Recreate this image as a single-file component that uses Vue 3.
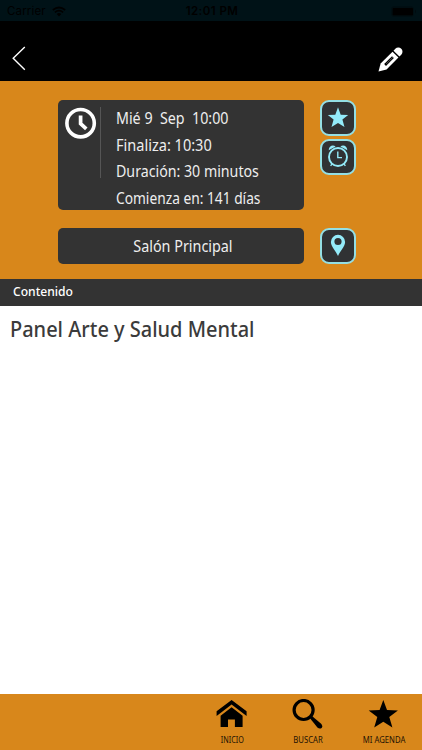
<script setup>
const details = [
  { text: 'Mié 9  Sep  10:00', cls: 'd0' },
  { text: 'Finaliza: 10:30', cls: 'd1' },
  { text: 'Duración: 30 minutos', cls: 'd2' },
  { text: 'Comienza en: 141 días', cls: 'd3' },
]
</script>

<template>
  <div class="screen">
    <div class="status">
      <div class="carrier">
        <span>Carrier</span>
        <svg width="14" height="11" viewBox="0 0 14 11">
          <path d="M.8 4Q7-1 13.2 4M2.9 6.4Q7 3 11.1 6.4" fill="none" stroke="#000" stroke-width="1.7" />
          <path d="M4.7 8Q7 6.2 9.3 8L7 10.4Z" fill="#000" />
        </svg>
      </div>
      <span class="time">12:01 PM</span>
      <svg class="battery" width="26" height="11" viewBox="0 0 26 11">
        <rect x="0.5" y="0.5" width="22" height="10" rx="2.5" fill="none" stroke="#000e12" />
        <rect x="1.5" y="1.8" width="20.5" height="7.6" rx="1.2" fill="#000" />
        <path d="M24 3.5q2 2 0 4z" fill="#000b0f" />
      </svg>
    </div>

    <header class="nav">
      <svg width="14" height="25" viewBox="0 0 14 25">
        <path d="M12.8 1L1.2 12.3L12.8 23.8" fill="none" stroke="#fff" stroke-width="1.4" />
      </svg>
      <svg width="26" height="26" viewBox="0 0 26 26">
        <g transform="translate(.5 25.6) rotate(-45)">
          <path d="M0 0L7.2-4.2H24V4.2H7.2Z" fill="#fff" />
          <path d="M25.4-4.2H28a4.2 4.2 0 0 1 0 8.4H25.4Z" fill="#fff" />
          <path d="M9.3-1.3H20.4V1.3H9.3Z" fill="#000" />
          <path d="M11-.25H20.4V.25H11Z" fill="#888" />
        </g>
      </svg>
    </header>

    <section class="info">
      <div class="row">
        <div class="card">
          <svg class="clock" width="32" height="32" viewBox="0 0 32 32" fill="none" stroke="#fff">
            <circle cx="15.6" cy="16.2" r="13.7" stroke-width="3.6" />
            <path d="M15.6 8.6V16.6L21.3 21.8" stroke-width="3.7" />
          </svg>
          <div class="rule"></div>
          <div class="details">
            <div v-for="d in details" :key="d.cls" :class="d.cls">{{ d.text }}</div>
          </div>
        </div>
        <div class="actions">
          <button class="action">
            <svg width="36" height="36" viewBox="0 0 36 36">
              <path d="M18 7.3L20.7 14.7L28.2 15L22.4 19.6L24.5 27L18 22.9L11.5 27L13.6 19.6L7.8 15L15.3 14.7Z" fill="#94ebf9" />
            </svg>
          </button>
          <button class="action">
            <svg width="36" height="36" viewBox="0 0 36 36" fill="none" stroke="#94ebf9">
              <circle cx="18" cy="18" r="9" stroke-width="1.9" />
              <path d="M17.8 12.6V18.6H22" stroke-width="1.4" />
              <path d="M8.7 11.2C8.7 7 13 5.2 15.6 7.6ZM27.3 11.2C27.3 7 23 5.2 20.4 7.6Z" fill="#94ebf9" stroke="none" />
              <path d="M12 25L10.6 26.9M24 25L25.4 26.9" stroke-width="1.3" />
            </svg>
          </button>
        </div>
      </div>
      <div class="row place">
        <div class="room"><span>Salón Principal</span></div>
        <button class="action">
          <svg width="36" height="36" viewBox="0 0 36 36">
            <path fill-rule="evenodd" d="M18 28.2C16.4 23.3 10.9 18.5 10.9 13.9A7.1 7.1 0 0 1 25.1 13.9C25.1 18.5 19.6 23.3 18 28.2ZM18 9.9A3.6 3.6 0 1 0 18 17.1A3.6 3.6 0 1 0 18 9.9Z" fill="#94ebf9" />
          </svg>
        </button>
      </div>
    </section>

    <div class="section-title"><span>Contenido</span></div>
    <main><h1>Panel Arte y Salud Mental</h1></main>

    <footer class="tabs">
      <div class="tab">
        <svg width="32" height="30" viewBox="0 0 32 30">
          <path d="M15.6 1L30.6 12.3V17L15.6 5.6L.6 17V12.3Z" />
          <path d="M15.6 8.3L26.6 16.8V28H18.9V20.6H12V28H4.6V16.8Z" />
        </svg>
        <span class="t0">INICIO</span>
      </div>
      <div class="tab">
        <svg width="32" height="30" viewBox="0 0 32 30">
          <circle cx="11.6" cy="11" r="9.5" fill="none" stroke="#000" stroke-width="3.2" />
          <path d="M17.4 18.6L19.4 16.6L29.4 25Q31 27.2 29.6 28.9Q27.8 30.4 25.4 28.6Z" />
        </svg>
        <span class="t1">BUSCAR</span>
      </div>
      <div class="tab">
        <svg width="32" height="30" viewBox="0 0 32 30">
          <path d="M15.3 1L19 11.1L29.9 11.5L21.3 18.1L24.4 28.6L15.3 22.7L6.2 28.6L9.3 18.1L.7 11.5L11.6 11.1Z" />
        </svg>
        <span class="t2">MI AGENDA</span>
      </div>
    </footer>
  </div>
</template>

<style>
body { margin: 0; }
</style>

<style scoped>
.screen {
  width: 422px;
  height: 750px;
  display: flex;
  flex-direction: column;
  overflow: hidden;
  background: #fff;
  font-family: "Noto Sans", sans-serif;
}
.status {
  height: 21px;
  flex: none;
  display: grid;
  grid-template-columns: 1fr auto 1fr;
  align-items: center;
  padding: 1px 5px 0 7px;
  box-sizing: border-box;
  background: #001217;
  color: #000;
  font: 11.5px/20px Inter, sans-serif;
}
.carrier { display: flex; align-items: center; gap: 6px; letter-spacing: .15px; }
.time { font-weight: 600; letter-spacing: .45px; }
.battery { justify-self: end; }
.nav {
  height: 60px;
  flex: none;
  box-sizing: border-box;
  display: flex;
  justify-content: space-between;
  align-items: flex-start;
  padding: 25px 18px 0 12px;
  background: #000;
}
.info {
  height: 198px;
  flex: none;
  box-sizing: border-box;
  padding: 19px 0 0 58px;
  background: #d8871b;
}
.row { display: flex; gap: 16px; }
.place { margin-top: 18px; }
.card {
  width: 246px;
  height: 110px;
  box-sizing: border-box;
  display: flex;
  padding: 7px 0 0 7px;
  border-radius: 5px;
  background: #333;
}
.clock { flex: none; }
.rule { width: 1px; height: 71px; margin-left: 3px; background: #555; }
.details {
  margin: -2px 0 0 14.5px;
  color: #eee;
  font-size: 15.6px;
  line-height: 26.5px;
  white-space: pre;
}
.details div { transform-origin: 0 50%; }
/* Condensed widths for each line */
.details .d0 { transform: scaleX(.915); }
.details .d1 { transform: scaleX(.932); }
.details .d2 { transform: scaleX(.91); }
.details .d3 { transform: scaleX(.882); }
.actions { display: flex; flex-direction: column; gap: 3px; }
.action {
  width: 36px;
  height: 36px;
  box-sizing: border-box;
  display: flex;
  align-items: center;
  justify-content: center;
  padding: 0;
  border: 2px solid #94dfe4;
  border-radius: 9px;
  background: #303234;
}
.action svg { flex: none; }
.room {
  width: 246px;
  height: 36px;
  border-radius: 5px;
  background: #333;
  color: #eee;
  text-align: center;
  font-size: 15.6px;
  line-height: 36px;
}
.room span { display: inline-block; transform: translateX(2px) scaleX(.92); }
.section-title {
  height: 27px;
  flex: none;
  box-sizing: border-box;
  padding-left: 12.5px;
  background: #333;
  color: #fff;
  font-size: 13.3px;
  font-weight: 500;
  line-height: 24px;
}
.section-title span { display: inline-block; transform: scaleX(.91); transform-origin: 0 50%; }
main { flex: 1; padding: 7px 10px 0; }
h1 {
  margin: 0;
  color: #3b3b3b;
  font-size: 22px;
  font-weight: 500;
  line-height: 30px;
  white-space: nowrap;
  transform: scaleX(.908);
  transform-origin: 0 50%;
}
.tabs {
  height: 56px;
  flex: none;
  display: flex;
  justify-content: flex-end;
  background: #d8871b;
}
.tab {
  width: 76px;
  display: flex;
  flex-direction: column;
  align-items: center;
  padding-top: 5px;
  box-sizing: border-box;
  color: #1d1203;
  font-size: 8.4px;
  line-height: 12px;
  white-space: nowrap;
}
.tab span { margin-top: 5px; }
.tab .t0 { transform: scaleX(.86); }
.tab .t1 { transform: scaleX(.92); }
.tab .t2 { transform: scaleX(.92); }
</style>
